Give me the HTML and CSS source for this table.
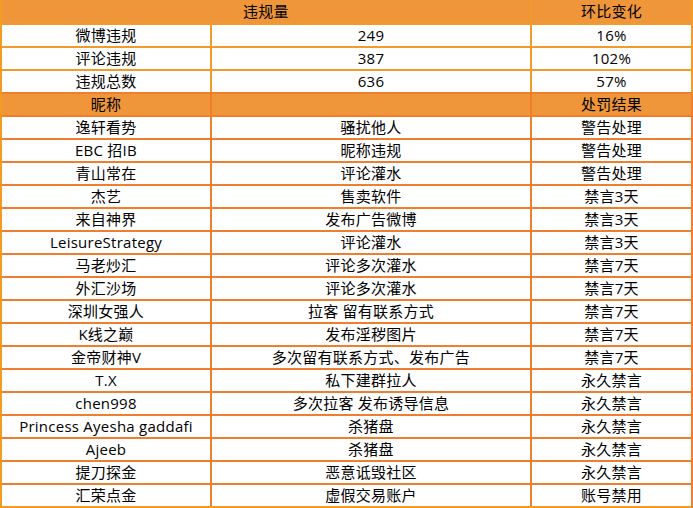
FILE: index.html
```html
<!DOCTYPE html>
<html lang="zh-CN">
<head>
<meta charset="utf-8">
<title>违规统计</title>
<link rel="stylesheet" href="styles.css">
</head>
<body>
<div class="sheet">
  <div class="section top">
    <div class="cell head span2">违规量</div>
    <div class="cell head">环比变化</div>
    <div class="cell">微博违规</div><div class="cell">249</div><div class="cell">16%</div>
    <div class="cell">评论违规</div><div class="cell">387</div><div class="cell">102%</div>
    <div class="cell">违规总数</div><div class="cell">636</div><div class="cell">57%</div>
  </div>
  <div class="section bottom">
    <div class="cell head">昵称</div><div class="cell head"></div><div class="cell head">处罚结果</div>
    <div class="cell">逸轩看势</div><div class="cell">骚扰他人</div><div class="cell">警告处理</div>
    <div class="cell">EBC 招IB</div><div class="cell">昵称违规</div><div class="cell">警告处理</div>
    <div class="cell">青山常在</div><div class="cell">评论灌水</div><div class="cell">警告处理</div>
    <div class="cell">杰艺</div><div class="cell">售卖软件</div><div class="cell">禁言3天</div>
    <div class="cell">来自神界</div><div class="cell">发布广告微博</div><div class="cell">禁言3天</div>
    <div class="cell">LeisureStrategy</div><div class="cell">评论灌水</div><div class="cell">禁言3天</div>
    <div class="cell">马老炒汇</div><div class="cell">评论多次灌水</div><div class="cell">禁言7天</div>
    <div class="cell">外汇沙场</div><div class="cell">评论多次灌水</div><div class="cell">禁言7天</div>
    <div class="cell">深圳女强人</div><div class="cell">拉客 留有联系方式</div><div class="cell">禁言7天</div>
    <div class="cell">K线之巅</div><div class="cell">发布淫秽图片</div><div class="cell">禁言7天</div>
    <div class="cell">金帝财神V</div><div class="cell">多次留有联系方式、发布广告</div><div class="cell">禁言7天</div>
    <div class="cell">T.X</div><div class="cell">私下建群拉人</div><div class="cell">永久禁言</div>
    <div class="cell">chen998</div><div class="cell">多次拉客 发布诱导信息</div><div class="cell">永久禁言</div>
    <div class="cell">Princess Ayesha gaddafi</div><div class="cell">杀猪盘</div><div class="cell">永久禁言</div>
    <div class="cell">Ajeeb</div><div class="cell">杀猪盘</div><div class="cell">永久禁言</div>
    <div class="cell">提刀探金</div><div class="cell">恶意诋毁社区</div><div class="cell">永久禁言</div>
    <div class="cell">汇荣点金</div><div class="cell">虚假交易账户</div><div class="cell">账号禁用</div>
  </div>
</div>
</body>
</html>
```
FILE: styles.css
```css
html, body {
  margin: 0;
  padding: 0;
  background: #ffffff;
}
.sheet {
  width: 693px;
  font-family: "Open Sans", "Noto Sans CJK SC", sans-serif;
  font-size: 15px;
  letter-spacing: 0.25px;
  color: #000000;
}
.section {
  display: grid;
  grid-template-columns: 208px 318px 159px;
  column-gap: 2px;
  row-gap: 2px;
}
.top {
  background: #f29a2a;
  grid-template-rows: 23px 21px 21px 21px;
  border-left: 2px solid #f29c24;
  border-right: 2px solid #f29c24;
}
.bottom {
  background: #f07e2c;
  border-left: 2px solid #f29c24;
  border-right: 2px solid #f07e2c;
  border-bottom: 2px solid #f29c24;
  padding-top: 2px;
  grid-auto-rows: 21px;
}
.cell {
  background: #ffffff;
  display: flex;
  align-items: center;
  justify-content: center;
  white-space: nowrap;
  line-height: 1;
}
.head {
  background: #ef963b;
}
.span2 {
  grid-column: span 2;
}
```
